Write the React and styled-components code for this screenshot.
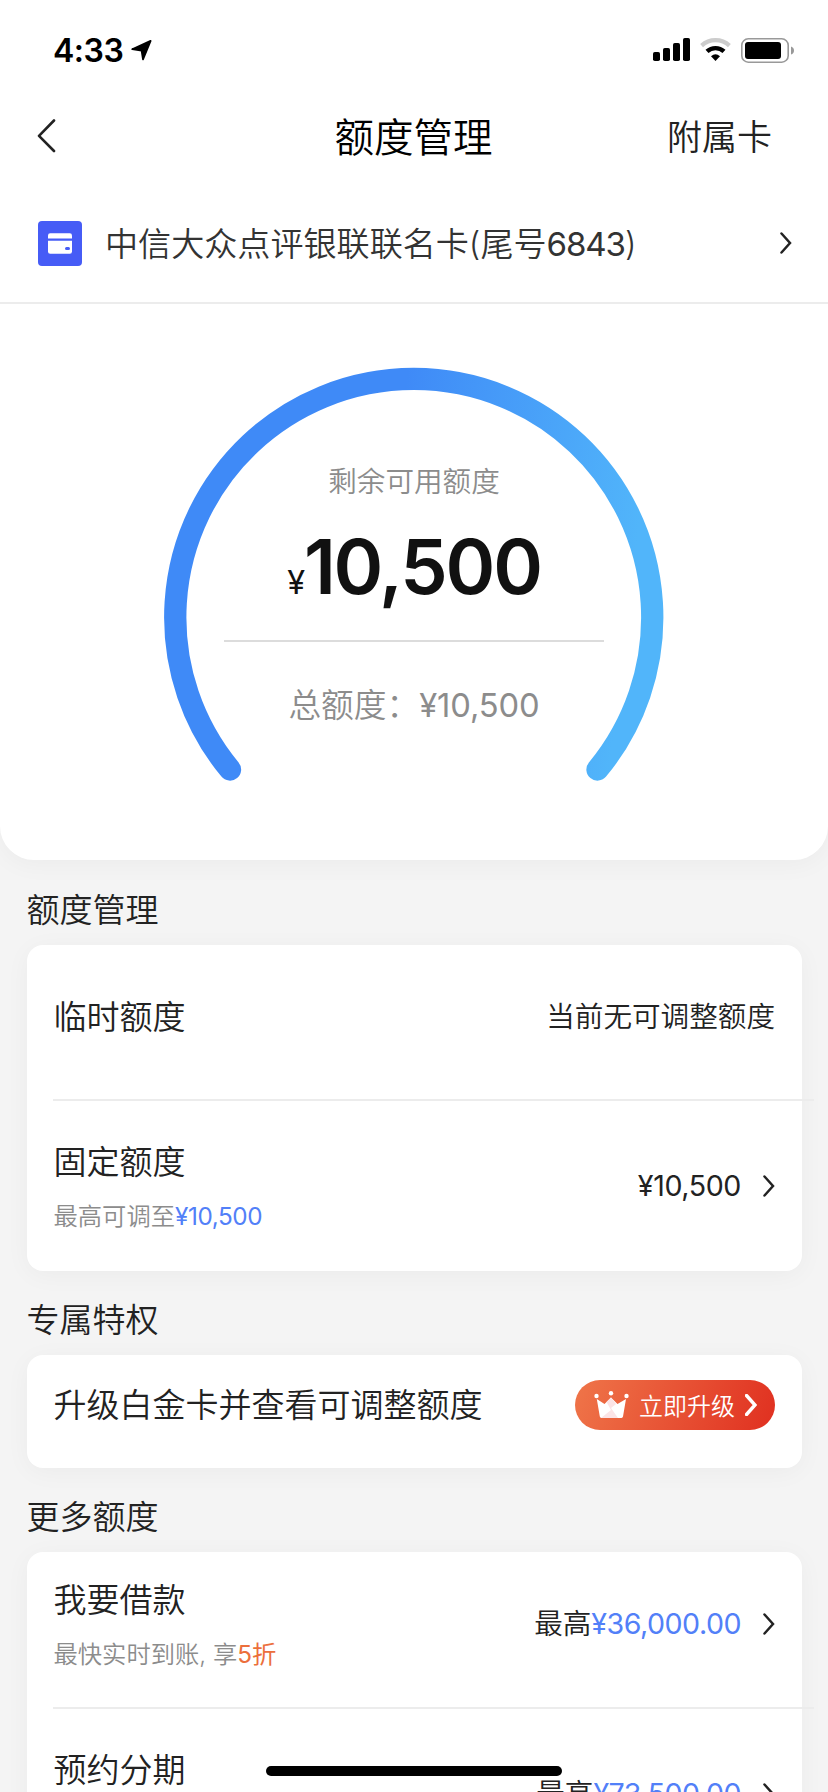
import React from 'react';
import styled, { createGlobalStyle } from 'styled-components';

const GlobalStyle = createGlobalStyle`
  * {
    box-sizing: border-box;
  }

  body {
    margin: 0;
    background: #f4f4f4;
    color: #222;
    font-family: Inter, 'Noto Sans CJK SC', sans-serif;
    font-weight: 350;
  }
`;

const Screen = styled.div`
  display: flex;
  flex-direction: column;
  height: 1792px;
  overflow: hidden;
`;

const Hero = styled.div`
  flex: none;
  height: 860px;
  margin-bottom: 1px;
  background: #fff;
  border-radius: 0 0 34px 34px;
  box-shadow: 0 4px 26px rgba(0, 0, 0, 0.04);
`;

const StatusBar = styled.div`
  display: flex;
  align-items: center;
  height: 98px;
  padding: 2px 34px 0 53px;
  color: #000;
`;

const Time = styled.span`
  font-size: 32px;
  font-weight: 600;
  letter-spacing: -0.5px;
  margin-right: 8px;
`;

const StatusIcons = styled.div`
  display: flex;
  align-items: center;
  gap: 10px;
  margin-left: auto;
`;

const NavBar = styled.div`
  display: grid;
  grid-template-columns: 1fr auto 1fr;
  align-items: center;
  height: 76px;
  padding: 0 56px 0 36px;
`;

const NavTitle = styled.h1`
  margin: 0;
  padding: 4px 0 0 19px;
  font-size: 39.5px;
  font-weight: 350;
  line-height: 72px;
  color: #000;
`;

const NavLink = styled.span`
  padding-top: 2px;
  font-size: 35px;
  line-height: 74px;
  text-align: right;
`;

const CardRow = styled.div`
  display: flex;
  align-items: center;
  height: 130px;
  padding: 10px 36px 0 38px;
  border-bottom: 2px solid #ececec;
`;

const CardName = styled.span`
  flex: 1;
  margin-left: 23px;
  padding-bottom: 3px;
  font-size: 33.1px;
  color: #333;
`;

const Num = styled.span`
  font-weight: 400;
  letter-spacing: ${(p) => p.$spacing || 0}px;
`;

const Gauge = styled.div`
  display: grid;
  justify-items: center;
  padding-top: 56px;

  > * {
    grid-area: 1 / 1;
  }
`;

const GaugeText = styled.div`
  display: flex;
  flex-direction: column;
  align-items: center;
  width: 380px;
  padding-top: 102px;
`;

const GaugeLabel = styled.div`
  font-size: 28.6px;
  line-height: 40px;
  color: #8c8c8c;
`;

const Amount = styled.div`
  display: flex;
  align-items: baseline;
  justify-content: center;
  width: 100%;
  height: 140px;
  padding-top: 15px;
  border-bottom: 2px solid #dcdcdc;
  font-size: 75.5px;
  font-weight: 600;
  line-height: 100px;
  letter-spacing: -2.2px;
  color: #111;
`;

const Currency = styled.span`
  margin-right: 1px;
  font-size: 32.5px;
  font-weight: 400;
`;

const Total = styled.div`
  margin-top: 39px;
  font-size: 32.7px;
  line-height: 48px;
  color: #8c8c8c;
  white-space: nowrap;
`;

const Section = styled.section`
  padding: 0 26.5px;
`;

const SectionTitle = styled.h2`
  margin: 0;
  height: 84px;
  padding-top: 25px;
  font-size: 33px;
  font-weight: 350;
  line-height: 48px;
`;

const Panel = styled.div`
  background: #fff;
  border-radius: 16px;
  box-shadow: 0 4px 26px rgba(0, 0, 0, 0.04);
`;

const Row = styled.div`
  display: flex;
  align-items: center;
  justify-content: space-between;
  height: ${(p) => p.$height}px;
  padding: 0 26.5px 0 27px;
  padding-bottom: ${(p) => p.$lift || 0}px;
`;

/* runs past the right edge of the panel */
const Divider = styled.div`
  height: 2px;
  margin: 0 -12px 0 26.5px;
  background: #ececec;
`;

const RowTitle = styled.div`
  font-size: 33px;
  line-height: 48px;
`;

const RowHint = styled.div`
  margin-top: 12px;
  font-size: 24.3px;
  line-height: 36px;
  color: #8c8c8c;
`;

const RowValue = styled.div`
  display: flex;
  align-items: center;
  font-size: 28.6px;
  line-height: 40px;
  white-space: nowrap;

  svg {
    margin-left: 22px;
  }
`;

const Highlight = styled(Num)`
  color: ${(p) => (p.$orange ? '#ec6f3c' : '#5280f8')};
`;

const UpgradeButton = styled.button`
  display: flex;
  align-items: center;
  width: 200px;
  height: 50px;
  padding: 0 18px 0 19px;
  border: 0;
  border-radius: 25px;
  background: linear-gradient(110deg, #ef7549, #e03020);
  color: #fff;
  font: inherit;
  font-size: 24px;
  white-space: nowrap;

  span {
    margin: 0 10px;
    padding-bottom: 2px;
  }
`;

const HomeIndicator = styled.div`
  position: fixed;
  left: 266px;
  bottom: 16px;
  width: 296px;
  height: 10px;
  border-radius: 5px;
  background: #000;
`;

const Chevron = ({ color = '#222', width = 2.5 }) => (
  <svg width="12" height="22" viewBox="0 0 12 22" fill="none">
    <path
      d="M1.5 1.5L10 11L1.5 20.5"
      stroke={color}
      strokeWidth={width}
      strokeLinecap="round"
    />
  </svg>
);

const BackIcon = () => (
  <svg width="20" height="34" viewBox="0 0 20 34" fill="none">
    <path
      d="M18 1.5L3 16.8L18 32"
      stroke="#222"
      strokeWidth="2.6"
      strokeLinecap="round"
      strokeLinejoin="round"
    />
  </svg>
);

const LocationIcon = () => (
  <svg width="21" height="21" viewBox="0 0 21 21">
    <path
      d="M1.2 9.2L19.6 0.9L12 19.4L10.6 10.6Z"
      stroke="#000"
      strokeWidth="1.8"
      strokeLinejoin="round"
    />
  </svg>
);

const SignalIcon = () => (
  <svg width="37" height="24" viewBox="0 0 37 24">
    <rect x="0" y="14" width="7" height="9" rx="1.8" />
    <rect x="10" y="10" width="7" height="13" rx="1.8" />
    <rect x="20" y="5" width="7" height="18" rx="1.8" />
    <rect x="30" y="0" width="7" height="23" rx="1.8" />
  </svg>
);

const WifiIcon = () => (
  <svg width="31" height="24" viewBox="0 0 31 24" fill="none">
    <path d="M1.6 7.6A20.5 20.5 0 0 1 29.4 7.6" stroke="#ccc" strokeWidth="4.2" />
    <path d="M7 13.4A12.6 12.6 0 0 1 24 13.4" stroke="#000" strokeWidth="4.4" />
    <path d="M11 18.2Q15.5 14.4 20 18.2L15.5 23Z" fill="#000" />
  </svg>
);

const BatteryIcon = () => (
  <svg width="53" height="25" viewBox="0 0 53 25">
    <rect x="0.8" y="0.8" width="46.4" height="23.4" rx="6.5" fill="none" stroke="#999" strokeWidth="1.6" />
    <rect x="4" y="4" width="36" height="17" rx="3" />
    <path d="M50 8.5Q53 9.5 53 12.5Q53 15.5 50 16.5Z" fill="#999" />
  </svg>
);

const BankCardIcon = () => (
  <svg width="44" height="45" viewBox="0 0 44 45">
    <rect width="44" height="45" rx="4" fill="#465cf6" />
    <path d="M10 17.6V14.5Q10 12.3 12.2 12.3H31.8Q34 12.3 34 14.5V17.6Z" fill="#fff" />
    <path d="M10 19.8H34V30.5Q34 32.7 31.8 32.7H12.2Q10 32.7 10 30.5Z" fill="#fff" />
    <rect x="27" y="26" width="5" height="3" rx="1.5" fill="#465cf6" />
  </svg>
);

const CrownIcon = () => (
  <svg width="35" height="28" viewBox="0 0 35 28" fill="#fff">
    <circle cx="2.5" cy="5" r="2.2" />
    <circle cx="17" cy="2.2" r="2.2" />
    <circle cx="32.5" cy="5" r="2.2" />
    <path d="M2.8 8L10.5 13L17 6.5L23.5 13L32 8L29 25.6Q28.8 27 27.4 27H7.4Q6 27 5.8 25.6Z" />
    <path d="M17 6.5L22 13L17 17L24 27H7L17 19L12.5 11Z" fill="#fbe4e6" />
  </svg>
);

const GaugeArc = () => (
  <svg width="500" height="430" viewBox="0 0 500 430" fill="none">
    <defs>
      <linearGradient id="arc" x1="0" y1="0" x2="1" y2="0.1">
        <stop offset="0.48" stopColor="#3f8af7" />
        <stop offset="1" stopColor="#51b5fa" />
      </linearGradient>
    </defs>
    <path
      d="M66 409.5A238.5 238.5 0 1 1 433.5 409.5"
      stroke="url(#arc)"
      strokeWidth="22.3"
      strokeLinecap="round"
    />
  </svg>
);

const App = () => (
  <Screen>
    <GlobalStyle />
    <Hero>
      <StatusBar>
        <Time>4:33</Time>
        <LocationIcon />
        <StatusIcons>
          <SignalIcon />
          <WifiIcon />
          <BatteryIcon />
        </StatusIcons>
      </StatusBar>
      <NavBar>
        <BackIcon />
        <NavTitle>额度管理</NavTitle>
        <NavLink>附属卡</NavLink>
      </NavBar>
      <CardRow>
        <BankCardIcon />
        <CardName>
          中信大众点评银联联名卡(尾号<Num $spacing={-1.1}>6843</Num>)
        </CardName>
        <Chevron />
      </CardRow>
      <Gauge>
        <GaugeArc />
        <GaugeText>
          <GaugeLabel>剩余可用额度</GaugeLabel>
          <Amount>
            <Currency>¥</Currency>10,500
          </Amount>
          <Total>
            总额度：<Num $spacing={-0.1}>¥10,500</Num>
          </Total>
        </GaugeText>
      </Gauge>
    </Hero>

    <Section>
      <SectionTitle>额度管理</SectionTitle>
      <Panel>
        <Row $height={154} $lift={10}>
          <RowTitle>临时额度</RowTitle>
          <RowValue>当前无可调整额度</RowValue>
        </Row>
        <Divider />
        <Row $height={170}>
          <div>
            <RowTitle>固定额度</RowTitle>
            <RowHint>
              最高可调至<Highlight $spacing={-0.4}>¥10,500</Highlight>
            </RowHint>
          </div>
          <RowValue>
            <Num $spacing={-0.4}>¥10,500</Num>
            <Chevron />
          </RowValue>
        </Row>
      </Panel>
    </Section>

    <Section>
      <SectionTitle>专属特权</SectionTitle>
      <Panel>
        <Row $height={113} $lift={13}>
          <RowTitle>升级白金卡并查看可调整额度</RowTitle>
          <UpgradeButton>
            <CrownIcon />
            <span>立即升级</span>
            <Chevron color="#fff" width={3.4} />
          </UpgradeButton>
        </Row>
      </Panel>
    </Section>

    <Section>
      <SectionTitle>更多额度</SectionTitle>
      <Panel>
        <Row $height={155} $lift={12}>
          <div>
            <RowTitle>我要借款</RowTitle>
            <RowHint>
              最快实时到账, 享<Highlight $orange>5折</Highlight>
            </RowHint>
          </div>
          <RowValue>
            最高<Highlight $spacing={-0.5}>¥36,000.00</Highlight>
            <Chevron />
          </RowValue>
        </Row>
        <Divider />
        <Row $height={170}>
          <div>
            <RowTitle>预约分期</RowTitle>
            <RowHint>最高可分期</RowHint>
          </div>
          <RowValue>
            最高<Highlight $spacing={-0.5}>¥73,500.00</Highlight>
            <Chevron />
          </RowValue>
        </Row>
      </Panel>
    </Section>
    <HomeIndicator />
  </Screen>
);

export default App;
